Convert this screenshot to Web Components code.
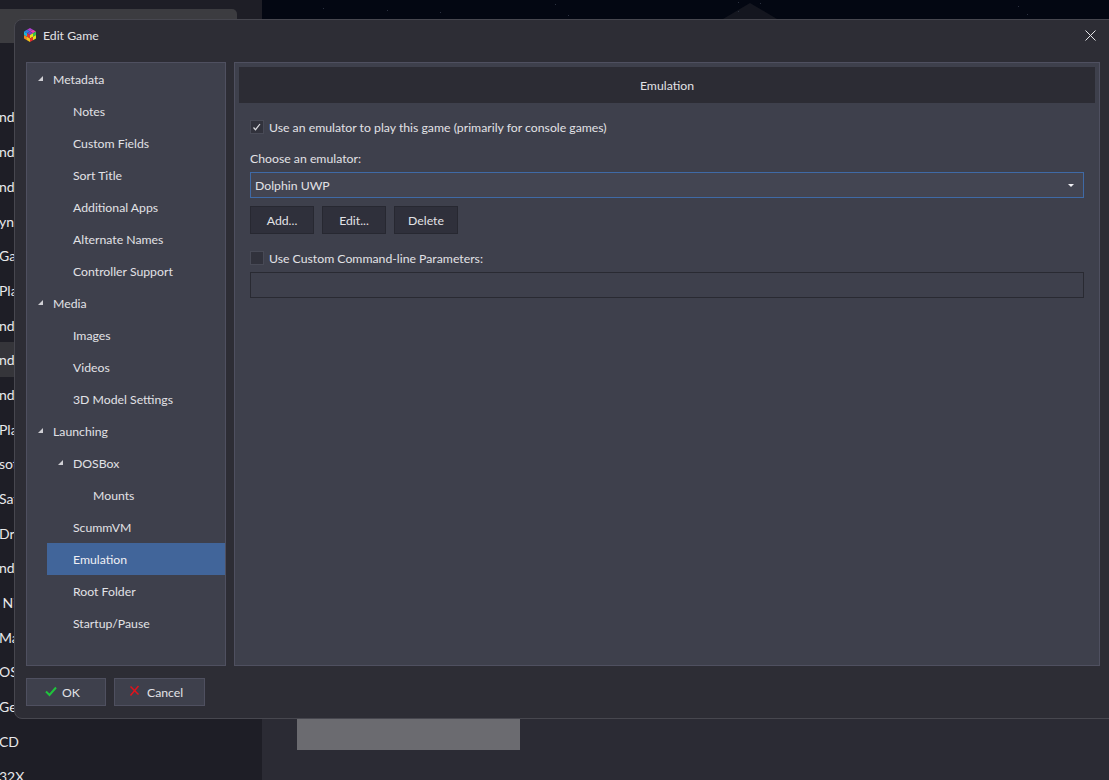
<!DOCTYPE html>
<html>
<head>
<meta charset="utf-8">
<title>Edit Game</title>
<style>
  html, body { margin: 0; height: 100%; overflow: hidden; background: #030712; }
  body { font: 12.25px Lato, sans-serif; color: #e2e2e6; }
</style>
</head>
<body>
<app-backdrop>
  <back-row>ndo</back-row>
  <back-row>ndo</back-row>
  <back-row>ndo</back-row>
  <back-row>yn</back-row>
  <back-row>Gar</back-row>
  <back-row>Pla</back-row>
  <back-row>ndo</back-row>
  <back-row selected>ndo</back-row>
  <back-row>ndo</back-row>
  <back-row>Pla</back-row>
  <back-row>sof</back-row>
  <back-row>Sat</back-row>
  <back-row>Dre</back-row>
  <back-row>ndo</back-row>
  <back-row>&nbsp;Ni</back-row>
  <back-row>Ma</back-row>
  <back-row>OS</back-row>
  <back-row>Ger</back-row>
  <back-row>CD</back-row>
  <back-row>32X</back-row>
</app-backdrop>

<edit-dialog caption="Edit Game">
  <tree-panel slot="tree">
    <tree-item level="0" open>Metadata</tree-item>
    <tree-item level="1">Notes</tree-item>
    <tree-item level="1">Custom Fields</tree-item>
    <tree-item level="1">Sort Title</tree-item>
    <tree-item level="1">Additional Apps</tree-item>
    <tree-item level="1">Alternate Names</tree-item>
    <tree-item level="1">Controller Support</tree-item>
    <tree-item level="0" open>Media</tree-item>
    <tree-item level="1">Images</tree-item>
    <tree-item level="1">Videos</tree-item>
    <tree-item level="1">3D Model Settings</tree-item>
    <tree-item level="0" open>Launching</tree-item>
    <tree-item level="1" open>DOSBox</tree-item>
    <tree-item level="2">Mounts</tree-item>
    <tree-item level="1">ScummVM</tree-item>
    <tree-item level="1" selected>Emulation</tree-item>
    <tree-item level="1">Root Folder</tree-item>
    <tree-item level="1">Startup/Pause</tree-item>
  </tree-panel>

  <emulation-panel slot="content" heading="Emulation">
    <check-box checked>Use an emulator to play this game (primarily for console games)</check-box>
    <field-label>Choose an emulator:</field-label>
    <combo-box value="Dolphin UWP"></combo-box>
    <div class="actions">
      <flat-button>Add...</flat-button>
      <flat-button>Edit...</flat-button>
      <flat-button>Delete</flat-button>
    </div>
    <check-box class="custom">Use Custom Command-line Parameters:</check-box>
    <text-box></text-box>
  </emulation-panel>

  <dialog-button slot="footer" icon="ok">OK</dialog-button>
  <dialog-button slot="footer" icon="cancel">Cancel</dialog-button>
</edit-dialog>

<script>
// small helper, every element just sets its own shadow markup
function shadow(el, html) {
  el.attachShadow({ mode: "open" }).innerHTML = html;
  return el.shadowRoot;
}

class AppBackdrop extends HTMLElement {
  constructor() {
    super();
    shadow(this, `
      <style>
        :host { display: block; position: absolute; inset: 0; overflow: hidden; }
        .side { position: absolute; left: 0; top: 0; bottom: 0; width: 262px; background: #1e1e26; }
        .tab { position: absolute; left: 0; top: 9px; width: 237px; height: 34px; background: #3c3c40; border-radius: 0 5px 0 0; }
        .rows { position: absolute; left: 0; top: 99.6px; width: 262px; }
        .lower { position: absolute; left: 262px; right: 0; top: 718px; bottom: 0; background: #2b2b34; }
        .thumb { position: absolute; left: 297px; top: 718px; width: 223px; height: 32px; background: #6b6b70; }
        svg { position: absolute; left: 262px; top: 0; }
      </style>
      <div class="side"></div>
      <div class="tab"></div>
      <div class="rows"><slot></slot></div>
      <div class="lower"></div>
      <div class="thumb"></div>
      <svg width="847" height="19" fill="#2b3140">
        <polygon points="461,19 488,3 515,19" fill="#14161f"/>
        <rect x="61" y="8" width="1" height="1"/>
        <rect x="125" y="10" width="1" height="1"/>
        <rect x="178" y="12" width="1" height="1"/>
        <rect x="293" y="4" width="1" height="1"/>
        <rect x="306" y="15" width="1" height="1"/>
        <rect x="476" y="11" width="1" height="1"/>
        <rect x="476" y="2" width="1" height="1"/>
        <rect x="498" y="3" width="1" height="1"/>
        <rect x="756" y="6" width="1" height="1"/>
        <rect x="765" y="14" width="1" height="1"/>
      </svg>
    `);
  }
}

class BackRow extends HTMLElement {
  constructor() {
    super();
    shadow(this, `
      <style>
        :host { display: flex; align-items: center; height: 34.7px; font-size: 14px; color: #e8e8ea; }
        :host([selected]) { background: #35353a; }
        span { margin-left: -1px; white-space: nowrap; }
      </style>
      <span><slot></slot></span>
    `);
  }
}

class EditDialog extends HTMLElement {
  constructor() {
    super();
    shadow(this, `
      <style>
        :host {
          position: absolute; left: 14px; top: 19px; width: 1120px; height: 700px; box-sizing: border-box;
          display: flex; flex-direction: column;
          background: #2d2d35; border: 1px solid #47474f; border-radius: 8px; color: #e2e2e6;
        }
        header { height: 30px; display: flex; align-items: center; padding-left: 8px; gap: 6px; flex: none; position: relative; }
        header svg { display: block; }
        .close { position: absolute; left: 1070px; top: 10px; }
        main { flex: none; display: flex; gap: 8px; height: 604px; margin: 12px 0 0 11px; }
        footer { display: flex; gap: 8px; margin: 12px 0 0 11px; }
        ::slotted([slot="tree"]) { width: 200px; flex: none; }
        ::slotted([slot="content"]) { width: 866px; flex: none; }
      </style>
      <header>
        <svg width="14" height="14" viewBox="0 0 14 14">
          <polygon points="7,0 10,1.7 7,3.5 4,1.7" fill="#a93fd0"/>
          <polygon points="4,1.7 7,3.5 4,5.2 1,3.5" fill="#2f7fe0"/>
          <polygon points="10,1.7 13,3.5 10,5.2 7,3.5" fill="#e23fb0"/>
          <polygon points="7,3.5 10,5.2 7,7 4,5.2" fill="#7b3fd0"/>
          <polygon points="1,3.5 4,5.2 4,8.7 1,7" fill="#1db4d8"/>
          <polygon points="4,5.2 7,7 7,10.5 4,8.7" fill="#e5322d"/>
          <polygon points="1,7 4,8.7 4,12.2 1,10.5" fill="#f08a1c"/>
          <polygon points="4,8.7 7,10.5 7,14 4,12.2" fill="#f5c21a"/>
          <polygon points="7,7 10,5.2 10,8.7 7,10.5" fill="#e9e11c"/>
          <polygon points="10,5.2 13,3.5 13,7 10,8.7" fill="#36c24a"/>
          <polygon points="7,10.5 10,8.7 10,12.2 7,14" fill="#e5322d"/>
          <polygon points="10,8.7 13,7 13,10.5 10,12.2" fill="#e9e11c"/>
        </svg>
        <span>${this.getAttribute("caption") || ""}</span>
        <svg class="close" width="11" height="11" viewBox="0 0 11 11"><path d="M.5.5l10 10M10.5.5l-10 10" stroke="#e6e6ea" stroke-width="1" fill="none"/></svg>
      </header>
      <main><slot name="tree"></slot><slot name="content"></slot></main>
      <footer><slot name="footer"></slot></footer>
    `);
  }
}

class TreePanel extends HTMLElement {
  constructor() {
    super();
    shadow(this, `
      <style>
        :host { display: block; box-sizing: border-box; background: #3e404c; border: 1px solid #4f5060; }
      </style>
      <slot></slot>
    `);
  }
}

class TreeItem extends HTMLElement {
  constructor() {
    super();
    const level = Number(this.getAttribute("level") || 0);
    shadow(this, `
      <style>
        :host { display: block; height: 32px; }
        .row { height: 32px; display: flex; align-items: center; box-sizing: border-box; margin-left: ${level * 20}px; position: relative; padding-left: 26px; }
        :host([selected]) .row { background: #41659a; color: #f0f0f4; }
        svg { position: absolute; left: 11px; top: 13px; }
        :host(:not([open])) svg { display: none; }
      </style>
      <div class="row">
        <svg width="5" height="5" viewBox="0 0 5 5"><polygon points="5,0 5,5 0,5" fill="#cfcfd4"/></svg>
        <slot></slot>
      </div>
    `);
  }
}

class EmulationPanel extends HTMLElement {
  constructor() {
    super();
    shadow(this, `
      <style>
        :host { display: block; box-sizing: border-box; background: #3e404c; border: 1px solid #4f5060; padding: 4px; }
        h2 { margin: 0; height: 36px; background: #2c2c34; font: inherit; display: flex; align-items: center; justify-content: center; color: #e2e2e6; }
        .body { padding: 16px 11px 0; display: flex; flex-direction: column; }
        ::slotted(.actions) { display: flex; gap: 8px; margin-top: 8px; }
        ::slotted(.custom) { margin-top: 16px; }
        ::slotted(text-box) { margin-top: 6px; }
      </style>
      <h2>${this.getAttribute("heading") || ""}</h2>
      <div class="body"><slot></slot></div>
    `);
  }
}

class CheckBox extends HTMLElement {
  constructor() {
    super();
    shadow(this, `
      <style>
        :host { display: flex; align-items: center; gap: 5px; height: 16px; }
        .box { box-sizing: border-box; width: 14px; height: 14px; background: #31323c; border: 1px solid #484a56; display: flex; align-items: center; justify-content: center; }
        svg { display: none; }
        :host([checked]) svg { display: block; }
      </style>
      <div class="box"><svg width="10" height="10" viewBox="0 0 10 10"><path d="M1.5 5.5l2 2.2L8 2" stroke="#dcdce0" stroke-width="1.2" fill="none"/></svg></div>
      <span><slot></slot></span>
    `);
  }
}

class FieldLabel extends HTMLElement {
  constructor() {
    super();
    shadow(this, `
      <style>:host { display: block; margin-top: 16px; height: 16px; line-height: 16px; }</style>
      <slot></slot>
    `);
  }
}

class ComboBox extends HTMLElement {
  constructor() {
    super();
    shadow(this, `
      <style>
        :host { display: flex; align-items: center; justify-content: space-between; box-sizing: border-box; height: 26px; margin-top: 5px; padding: 0 9px 0 4px; border: 1px solid #3f6aa6; background: #434552; }
        i { width: 0; height: 0; border: 3px solid transparent; border-top: 3px solid #f0f0f4; border-bottom: 0; }
      </style>
      <span>${this.getAttribute("value") || ""}</span><i></i>
    `);
  }
}

class FlatButton extends HTMLElement {
  constructor() {
    super();
    shadow(this, `
      <style>
        :host { display: flex; align-items: center; justify-content: center; box-sizing: border-box; width: 64px; height: 28px; background: #2f303b; border: 1px solid #272831; }
      </style>
      <slot></slot>
    `);
  }
}

class TextBox extends HTMLElement {
  constructor() {
    super();
    shadow(this, `
      <style>:host { display: block; box-sizing: border-box; height: 26px; border: 1px solid #292a32; background: #3e404c; }</style>
    `);
  }
}

class DialogButton extends HTMLElement {
  constructor() {
    super();
    const ok = this.getAttribute("icon") === "ok";
    const icon = ok
      ? `<path d="M1 6.5l3.5 3.5L11 2.5" stroke="#1fc43c" stroke-width="2" fill="none"/>`
      : `<path d="M1.5 1.5l8 8M9.5 1l-8 9.5" stroke="#e0121c" stroke-width="1.5" fill="none"/>`;
    shadow(this, `
      <style>
        :host { display: flex; align-items: center; box-sizing: border-box; width: ${ok ? 80 : 91}px; height: 28px; padding-left: ${ok ? 18 : 14}px; gap: ${ok ? 5 : 6}px; background: #3e404c; border: 1px solid #4f5060; }
        svg { display: block; margin-top: -3px; }
      </style>
      <svg width="12" height="12" viewBox="0 0 12 12">${icon}</svg>
      <span><slot></slot></span>
    `);
  }
}

customElements.define("app-backdrop", AppBackdrop);
customElements.define("back-row", BackRow);
customElements.define("edit-dialog", EditDialog);
customElements.define("tree-panel", TreePanel);
customElements.define("tree-item", TreeItem);
customElements.define("emulation-panel", EmulationPanel);
customElements.define("check-box", CheckBox);
customElements.define("field-label", FieldLabel);
customElements.define("combo-box", ComboBox);
customElements.define("flat-button", FlatButton);
customElements.define("text-box", TextBox);
customElements.define("dialog-button", DialogButton);
</script>
</body>
</html>
